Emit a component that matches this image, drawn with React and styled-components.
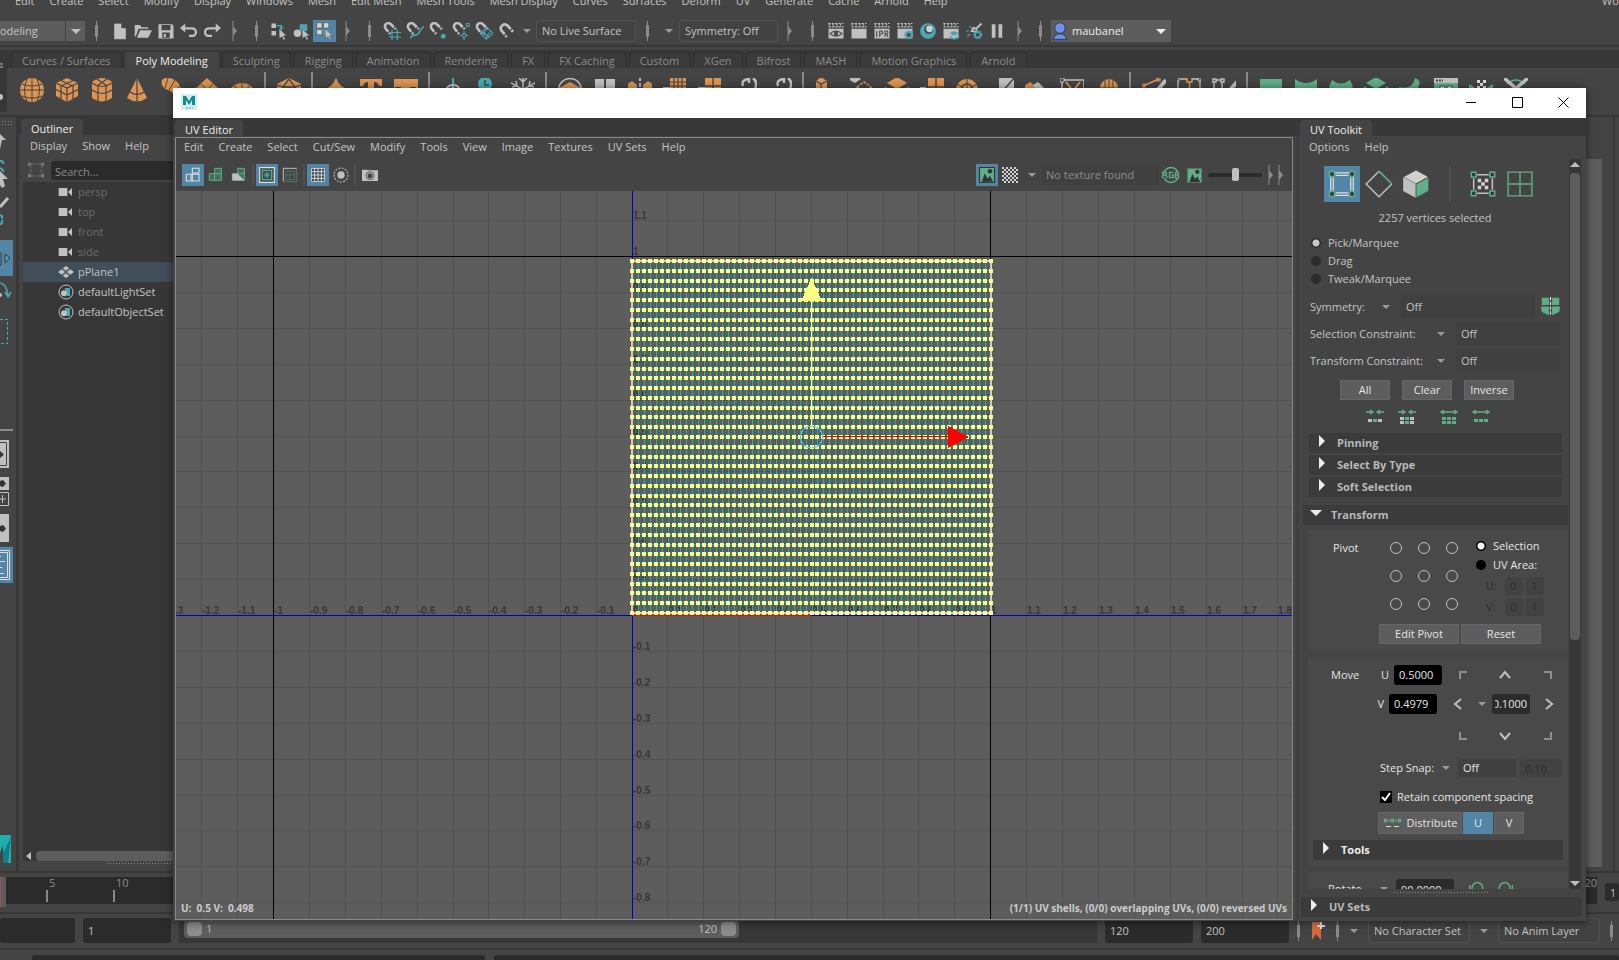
import React from "react";
import styled, { createGlobalStyle, css } from "styled-components";

const c = {
  bg: "#444444",
  dark: "#373737",
  field: "#2b2b2b",
  raised: "#5d5d5d",
  text: "#c4c4c4",
  dim: "#8c8c8c",
  blue: "#5285a6",
  green: "#5fae88",
  teal: "#49a8b4",
  orange: "#dd9351",
  icon: "#c0c0c0",
};

const Global = createGlobalStyle`
  * { box-sizing: border-box; }
  html, body, #root { height: 100%; }
  body { margin: 0; background: ${c.bg}; overflow: hidden; }
  body, button, input, select {
    font-family: "Open Sans", "Noto Sans", sans-serif;
    font-size: 11px;
    line-height: 16px;
    color: ${c.text};
  }
  button, input, select { margin: 0; padding: 0; border: 0; border-radius: 0; background: none; outline: none; }
  select, input { appearance: none; }
  a { color: inherit; text-decoration: none; }
  svg { display: block; flex: none; }
`;

/* ---------- shared parts ---------- */

const Screen = styled.div`
  position: relative;
  display: flex;
  flex-direction: column;
  height: 100vh;
  overflow: hidden;
`;

const MenuRow = styled.nav`
  display: flex;
  flex: none;
  align-items: ${(p) => (p.$clipped ? "flex-end" : "center")};
  gap: 15px;
  height: ${(p) => (p.$clipped ? 9 : p.$h || 22)}px;
  padding-left: ${(p) => p.$left}px;
  white-space: nowrap;
`;
const MenuEnd = styled.a`
  margin-left: auto;
  width: 17px;
  overflow: visible;
`;

const Slot = styled.button`
  display: flex;
  flex: none;
  align-items: center;
  justify-content: center;
  width: ${(p) => p.$w || 23}px;
  height: ${(p) => p.$h || 22}px;
  background: ${(p) => (p.$on ? c.blue : "none")};
`;

const Separator = styled.span`
  display: flex;
  flex: none;
  align-items: center;
  justify-content: center;
  width: ${(p) => p.$w || 23}px;
  height: 20px;
  &::before {
    content: "";
    width: 1px;
    height: 20px;
    background: #8a8a8a;
  }
  &::after {
    content: "";
    width: 3px;
    height: 12px;
    margin-left: -2px;
    background: #8a8a8a;
  }
`;

const Divider = styled.span`
  flex: none;
  width: 2px;
  height: ${(p) => p.$h}px;
  margin: 0 ${(p) => p.$m}px;
  background: ${(p) => p.$color || "#505050"};
`;

const Caret = styled.span`
  flex: none;
  width: 0;
  height: 0;
  border-left: 4px solid transparent;
  border-right: 4px solid transparent;
  border-top: 4px solid #9a9a9a;
`;

const FlatSelect = styled.select`
  flex: ${(p) => (p.$w ? "none" : 1)};
  width: ${(p) => (p.$w ? p.$w + "px" : "auto")};
  min-width: 0;
  height: ${(p) => p.$h || 22}px;
  padding-left: 5px;
  background: #404040;
  border-radius: 3px;
  color: ${(p) => p.$color || c.text};
  opacity: 1;
`;

function Svg({ w = 22, h, box = 24, children }) {
  return (
    <svg width={w} height={h || w} viewBox={`0 0 ${box} ${box}`} fill="none" aria-hidden="true">
      {children}
    </svg>
  );
}

function Collapser({ w = 23 }) {
  return (
    <Slot $w={w} aria-label="Collapse section">
      <svg width="6" height="20" viewBox="0 0 6 20" aria-hidden="true">
        <path d="M1 0V20" stroke="#8a8a8a" />
        <path d="M1 5L5 10L1 15Z" fill="#8a8a8a" />
      </svg>
    </Slot>
  );
}

/* ---------- status line ---------- */

const StatusLine = styled.div`
  display: flex;
  flex: none;
  align-items: center;
  height: 36px;
  padding-top: 8px;
`;
const ModeCombo = styled.label`
  position: relative;
  display: flex;
  flex: none;
  width: ${(p) => p.$w}px;
  height: ${(p) => p.$h}px;
  background: ${c.raised};
  overflow: hidden;
  select {
    flex: none;
    width: calc(100% + ${(p) => p.$cut || 0}px);
    margin-left: -${(p) => p.$cut || 0}px;
    padding-left: ${(p) => p.$pad}px;
    color: ${(p) => p.$color || c.text};
  }
`;
const ComboArrow = styled.span`
  position: absolute;
  top: 0;
  right: 0;
  display: flex;
  align-items: center;
  justify-content: center;
  width: 20px;
  height: 100%;
  border-left: ${(p) => (p.$line ? "1px solid #444" : "0")};
  pointer-events: none;
  &::after {
    content: "";
    border-left: 5px solid transparent;
    border-right: 5px solid transparent;
    border-top: 5px solid ${(p) => p.$color};
  }
`;
const AccountBox = styled.span`
  position: absolute;
  top: 2px;
  left: 0;
`;

const pointer = <path d="M12 9L22 18L18 18.500L20.500 23L18 24L16 19.500L12.500 22Z" fill={c.icon} stroke="#444" strokeWidth=".6" />;
const magnet = (
  <>
    <path d="M7 13L4 9.500C0 4 6 -1 10.500 3L14.500 7" stroke={c.icon} strokeWidth="3.400" />
    <path d="M8 14.200L9.500 16M15.500 8L17 9.700" stroke={c.icon} strokeWidth="3.400" />
  </>
);
const clap = (
  <>
    <path d="M2 9H22V22H2Z" fill={c.icon} />
    <path d="M2 2L5 6M7 2L10 6M12 2L15 6M17 2L20 6M2 2H22M2 6.500H22" stroke={c.icon} strokeWidth="1.500" strokeDasharray="3 1.500" />
  </>
);
const gear = (x, y) => (
  <>
    <circle cx={x} cy={y} r="4.500" stroke={c.teal} strokeWidth="3" strokeDasharray="2 1.200" fill="#444" />
    <circle cx={x} cy={y} r="3.400" stroke={c.teal} strokeWidth="1.800" />
  </>
);

const fileIcons = [
  ["New scene", <path d="M4 2H14L20 8V23H4ZM14 2V8H20" fill={c.icon} stroke="#555" strokeWidth=".6" />],
  ["Open scene", <path d="M1 20V4H8L10 7H19V9H6L3 18ZM4 21L8 11H24L19 21Z" fill={c.icon} />],
  ["Save scene", <path fillRule="evenodd" d="M2 3H20L22 5V22H2ZM6 4V11H18V4ZM7 14V21H17V14ZM9 16H12V20H9Z" fill={c.icon} />],
  ["Undo", <path d="M7 2L0 8L7 14V10H16C21 10 21 17 16 17H12V20H16C25 20 25 7 16 7H7Z" fill={c.icon} />],
  ["Redo", <path d="M17 2L24 8L17 14V10H8C3 10 3 17 8 17H12V20H8C-1 20 -1 7 8 7H17Z" fill={c.icon} />],
];
const maskIcons = [
  ["Select by hierarchy", <><path d="M2 2H8V8H2ZM2 12H8V18H2Z" fill={c.icon} /><path d="M9 5H15V16M13 8H18" stroke={c.teal} strokeWidth="2" />{pointer}</>],
  ["Select by object", <><circle cx="6" cy="15" r="5" fill={c.icon} /><path d="M9 3H19V12H9Z" fill={c.teal} />{pointer}</>],
  ["Select by component", <><path d="M1 1H8V8H1ZM10 1H17V8H10ZM1 10H8V17H1Z" fill="#d4d4d4" stroke="#333" strokeWidth=".6" /><path d="M10 10H17V17H10Z" fill={c.teal} />{pointer}</>],
];
const snapIcons = [
  ["Snap to grids", <>{magnet}<path d="M8 14H24M8 20H24M12 10V24M19 10V24" stroke={c.teal} strokeWidth="1.600" /></>],
  ["Snap to curves", <>{magnet}<path d="M6 22Q7 18 11 17.500Q16 18 18 13Q20 9 24 6" stroke={c.teal} strokeWidth="2.200" /></>],
  ["Snap to points", <>{magnet}<circle cx="19" cy="19" r="3.200" fill={c.teal} /></>],
  ["Snap to projected centre", <>{magnet}<circle cx="21" cy="4" r="2.200" stroke={c.teal} strokeWidth="1.500" /><circle cx="16" cy="18" r="2.500" stroke={c.teal} strokeWidth="1.500" /><path d="M16 12V15M16 21V24M10 18H13M19 18H22" stroke={c.teal} strokeWidth="1.500" /></>],
  ["Snap to view planes", <>{magnet}<path d="M7 15L16 7L24 15L15 23ZM10 13L19 20M14 11L11 19M21 12L14 22" stroke={c.teal} strokeWidth="1.400" /></>],
  ["Make live", <><path d="M9 16.500L5 12C1 6 8 0.500 13 5L17 9.500" stroke={c.icon} strokeWidth="3.600" /><path d="M10 18L11.500 20M18 10.700L20 13" stroke={c.icon} strokeWidth="3.600" /></>],
];
const renderIcons = [
  ["Open render view", <>{clap}<path d="M4 15.500Q12 9 20 15.500Q12 22 4 15.500Z" stroke="#444" strokeWidth="1.600" /><circle cx="12" cy="15.500" r="2.800" fill="#444" /></>],
  ["Render frame", clap],
  ["IPR render", <>{clap}<path d="M5 12V20M9 20V12H12Q14 14 12 16H9M16 20V12H19Q21 14 19 16H16M18 16L20 20" stroke="#444" strokeWidth="1.400" /></>],
  ["Render settings", <>{clap}{gear(17, 17)}</>],
  ["Hypershade", <><circle cx="12" cy="12" r="10.500" fill={c.teal} /><circle cx="13" cy="10" r="6" fill="#3a4a4d" /><circle cx="14" cy="9" r="4.500" fill="#d0d0d0" /></>],
  ["Render setup", <>{clap}<path d="M10 15L16 12L23 15L16 18.500ZM10 18L16 21.500L23 18V20L16 24L10 20Z" fill={c.teal} /></>],
  ["Light editor", <><path d="M22 2L15 9L11 8L9 12L14 13L17 11" stroke={c.icon} strokeWidth="2.600" /><path d="M1 12H5M3 19L7 16M6 5L8 8" stroke={c.teal} strokeWidth="1.600" />{gear(17, 17)}</>],
  ["Pause viewport", <path d="M5 3H10V21H5ZM14 3H19V21H14Z" fill={c.icon} />],
];

function IconSet({ items, on }) {
  return items.map(([label, art], i) => (
    <Slot key={label} aria-label={label} $on={on === i}>
      <Svg w={18}>{art}</Svg>
    </Slot>
  ));
}

/* ---------- shelf ---------- */

const ShelfBox = styled.div`
  display: flex;
  flex: none;
  height: 72px;
  padding-top: 3px;
  border-top: 2px solid ${c.dark};
  border-bottom: 2px solid ${c.dark};
`;
const ShelfHandle = styled.div`
  display: flex;
  flex-direction: column;
  justify-content: space-around;
  flex: none;
  width: 7px;
  height: 62px;
  background: ${c.dark};
`;
const ShelfMain = styled.div`
  flex: 1;
  min-width: 0;
`;
const ShelfTabs = styled.div`
  display: flex;
  align-items: flex-end;
  gap: 3px;
  height: 18px;
  padding-left: 4px;
  background: ${c.dark};
`;
const ShelfTab = styled.button`
  height: 16px;
  padding: 0 10px;
  border: 1px solid ${(p) => (p.$on ? c.bg : "#2f2f2f")};
  border-bottom: 0;
  border-radius: 3px 3px 0 0;
  background: ${(p) => (p.$on ? c.bg : "#3a3a3a")};
  color: ${(p) => (p.$on ? "#eeeeee" : c.dim)};
  white-space: nowrap;
`;
const ShelfIcons = styled.div`
  display: flex;
  align-items: center;
  height: 44px;
  padding-left: 7px;
`;

const O = c.orange;
const G = c.green;
const I = c.icon;
const K = "#444";
const shelf = [
  ["Sphere", <><circle cx="12" cy="12" r="12" fill={O} /><path d="M0 12H24M2 6Q12 10 22 6M2 18Q12 22 22 18M12 0V24M7 1Q2 12 7 23M17 1Q22 12 17 23" stroke={K} /></>],
  ["Cube", <><path d="M12 0L23 5V18L12 24L1 18V5Z" fill={O} /><path d="M1 5L12 10L23 5M12 10V24M1 11.500L12 17L23 11.500M6 7.500V21M18 7.500V21M6 2.500L18 8M18 2.500L6 8" stroke={K} strokeWidth="1.200" /></>],
  ["Cylinder", <><path d="M2 4Q12 -4 22 4V20Q12 27 2 20Z" fill={O} /><path d="M2 5Q12 12 22 5M2 12Q12 19 22 12M8 8V24M16 8V24M7 1L17 8M17 1L7 8" stroke={K} strokeWidth="1.200" /></>],
  ["Cone", <><path d="M12 0L22 20Q12 27 2 20Z" fill={O} /><path d="M12 0V24M5 14Q12 19 19 14" stroke={K} strokeWidth="1.200" /></>],
  ["Torus", <><path d="M2 2Q6 -2 13 1Q22 5 24 22H17Q14 14 8 12Q0 9 2 2Z" fill={O} /><path d="M8 0L5 10M15 2L9 12M20 8L13 15" stroke={K} /></>],
  ["Plane", <><path d="M12 0L25 12L12 24L-1 12Z" fill={O} /><path d="M6 6L18 18M18 6L6 18" stroke={K} /></>],
  ["Disc", <><ellipse cx="12" cy="14" rx="12" ry="9" fill={O} /><path d="M12 5V14M4 8L12 14L20 8" stroke={K} /></>],
  null,
  ["Platonic solid", <><path d="M12 0L24 6V18L12 24L0 18V6Z" fill={O} /><path d="M12 1L6 9H18ZM0 7L6 9L2 18M24 7L18 9L22 18M6 9L12 20L18 9" stroke={K} strokeWidth="1.300" /></>],
  null,
  ["Super shape", <path d="M12 -1Q14 9 26 12Q14 15 12 25Q10 15 -2 12Q10 9 12 -1Z" fill={O} />],
  ["Type", <path d="M1 1H23V8H20Q19 4 15 4V22H9V4Q5 4 4 8H1Z" fill={O} />],
  ["SVG", <><path d="M0 1H24V23H0Z" fill={O} /><path d="M7 10H2V13H6V18M9 10L12 18L15 10M22 10H17V17H22" stroke={K} strokeWidth="2" /></>],
  null,
  ["Frame zero", <><path d="M12 -2V10" stroke={c.teal} strokeWidth="2" /><path d="M5 13Q6 7 12 7T19 13L12 10Z" stroke={I} strokeWidth="2" /></>],
  ["Delete history", <><circle cx="9" cy="6" r="7" fill={c.teal} /><path d="M9 2V7H13" stroke={K} strokeWidth="1.500" /><path d="M14 11H25" stroke={c.teal} strokeWidth="2" /></>],
  ["Freeze", <path d="M12 -2V24M0 5L24 18M24 5L0 18M8 0L12 4L16 0M1 9L6 8L5 3M23 9L18 8L19 3" stroke={I} strokeWidth="1.500" />],
  null,
  ["Smooth", <><circle cx="12" cy="12" r="11.500" stroke={I} strokeWidth="1.500" /><path d="M1 10L12 4L23 10L12 17Z" fill={O} /></>],
  ["Combine", <path d="M2 1H11V24H2ZM13 1H22V24H13Z" fill={I} />],
  ["Mirror", <><path d="M-2 7L4 3L9 7V14H-2ZM15 7L20 3L26 7V14H15Z" fill={O} /><path d="M12 -1V24" stroke="#ddd" strokeDasharray="4 2" strokeWidth="1.500" /></>],
  ["Remesh", <><path d="M7 0H23V18H7Z" fill={O} /><path d="M7 4H23M7 8H23M11 0V18M15 0V18M19 0V18" stroke={K} strokeWidth="1.200" /><path d="M-1 10H7" stroke={I} strokeWidth="2" /></>],
  ["Retopologize", <><path d="M7 0H23V18H7Z" fill={O} /><path d="M7 8H23M15 0V18" stroke={K} strokeWidth="1.400" /><path d="M-1 10H7" stroke={I} strokeWidth="2" /></>],
  ["Reduce", <><path d="M-2 10H8V14H-2Z" fill={O} /><path d="M10 8Q8 2 15 1M13 -1H16V5M20 0Q26 5 21 12" stroke={I} strokeWidth="2.400" /></>],
  ["Spin edge", <><path d="M-2 10H8V14H-2Z" fill={O} /><path d="M10 8Q8 2 15 1M13 -1H16V5M20 0Q26 5 21 12" stroke={I} strokeWidth="2.400" /></>],
  null,
  ["Extrude", <><path d="M1 3L6 -1L12 3V20H1Z" fill={O} /><path d="M1 3L6 6L12 3M6 6V20" stroke={K} strokeWidth="1.200" /></>],
  ["Bevel", <><path d="M-2 1L4 -3L11 1L5 5Z" fill={I} /><path d="M7 9L14 4L21 9L14 14Z" stroke={O} strokeWidth="1.500" strokeDasharray="3 1" /></>],
  ["Bridge", <><path d="M2 5L12 -1L22 5L12 11Z" fill={O} /><path d="M0 9L12 15L24 9V13L12 20L0 13Z" fill={I} /></>],
  ["Fill", <><path d="M8 0H24V18H8Z" fill={O} /><path d="M16 0V14M8 9L24 9" stroke={K} strokeWidth="1.500" /><path d="M-2 10H6" stroke={I} strokeWidth="2" /></>],
  ["Circularize", <><circle cx="12" cy="12" r="11" fill={O} /><circle cx="12" cy="12" r="6" stroke={K} strokeWidth="1.500" /><path d="M12 0V24M2 6L22 18M22 6L2 18" stroke={K} /></>],
  ["Connect", <><path d="M9 0H24V14H9Z" fill={I} /><path d="M0 10H12V14H0Z" fill={O} /><path d="M24 0L12 14" stroke={K} strokeWidth="1.500" /></>],
  ["Detach", <><path d="M-2 9L5 4L11 9L5 14Z" fill={O} /><path d="M8 7L13 4L21 12L13 14Z" fill={I} /></>],
  ["Target weld", <><path d="M2 2V24M2 2H24M24 2V24" stroke={I} strokeWidth="1.500" /><path d="M0 0H4V4H0Z" stroke={I} fill={K} /><path d="M6 4L13 13L20 4" stroke={O} strokeWidth="2" /></>],
  ["Quad draw", <><circle cx="14" cy="10" r="9" fill={O} /><path d="M5 10H23M14 0V20M10 2V18M18 2V18" stroke={K} /></>],
  null,
  ["Multi-cut", <><path d="M1 8L17 1" stroke={O} strokeWidth="1.500" /><path d="M0 6H3V9H0ZM15 0H18V3H15Z" stroke={O} strokeWidth="1.200" /><path d="M24 2L14 14" stroke={I} strokeWidth="4" /></>],
  ["Connect tool", <><path d="M3 1H10M15 1H22M1 3V20M23 3V20" stroke={I} strokeWidth="1.300" /><path d="M-1 0H2V3H-1ZM21 0H24V3H21Z" stroke={I} /><path d="M10 -1H15V4H10ZM12.500 4V20" stroke={O} strokeWidth="1.500" /></>],
  ["Edge flow", <><path d="M1 1H4V4H1ZM9 1H12V4H9ZM2 4V20M10 4V20M4 2H9" stroke={I} strokeWidth="1.500" /><path d="M25 4L18 12" stroke={I} strokeWidth="4" /></>],
  null,
  ["UV planar", <path d="M1 1H23V23H1Z" fill={G} />],
  ["UV cylindrical", <path d="M1 1Q12 9 23 1V23H1Z" fill={G} />],
  ["UV spherical", <path d="M3 2Q12 9 21 2Q24 7 24 12H0Q0 7 3 2Z" fill={G} />],
  ["UV automatic", <><path d="M2 5L12 -1L22 5L12 11Z" fill={G} /><path d="M0 8L12 15L24 8V13L12 20L0 13Z" fill={G} /></>],
  ["UV contour", <path d="M0 9Q14 12 16 0Q23 2 19 10L12 14H0Z" fill={G} />],
  ["UV editor", <><path d="M0 0H24V5H0Z" fill={I} /><path d="M0 5H24V20H0Z" fill={G} /><path d="M2 2.500H9" stroke={K} strokeWidth="2" strokeDasharray="2 1" /><path d="M6 8H11V14H6ZM13 8H18V14H13Z" fill="#ddd" stroke={K} /></>],
  ["UV 3D cut", <><path d="M-1 6Q6 8 8 14H-1ZM25 6Q18 8 16 14H25Z" fill={G} /><path d="M8 2H11V5H8ZM14 2H17V5H14ZM11 5H14V8H11ZM8 8H11V11H8ZM14 8H17V11H14Z" fill="#ddd" /></>],
  ["UV cut and sew", <><path d="M3 6Q12 -2 21 6" stroke={G} strokeWidth="1.500" /><path d="M0 0L16 14M24 0L8 14" stroke={I} strokeWidth="3.500" /></>],
];

/* ---------- workspace behind the floating window ---------- */

const Workspace = styled.div`
  display: flex;
  flex: 1;
  min-height: 0;
`;
const Toolbox = styled.div`
  display: flex;
  flex: none;
  flex-direction: column;
  width: 18px;
  border-right: 2px solid ${c.dark};
  overflow: hidden;
`;
const OutlinerPanel = styled.section`
  display: flex;
  flex: none;
  flex-direction: column;
  width: 250px;
  border-left: 1px solid ${c.dark};
`;
const TabStrip = styled.div`
  display: flex;
  flex: none;
  align-items: flex-end;
  height: 18px;
  padding-left: ${(p) => p.$left}px;
  background: ${c.dark};
`;
const Tab = styled.button`
  height: 16px;
  padding: 2px 10px 0;
  border-radius: 3px 3px 0 0;
  background: ${c.bg};
  color: #eeeeee;
  white-space: nowrap;
`;
const SearchRow = styled.label`
  display: flex;
  align-items: center;
  gap: 7px;
  height: 25px;
  padding: 1px 0 0 9px;
`;
const SearchInput = styled.input`
  flex: 1;
  height: 19px;
  padding: 2px 0 0 4px;
  border-radius: 3px;
  background: ${c.field};
  &::placeholder { color: #8a8a8a; opacity: 1; }
`;
const NodeList = styled.ul`
  flex: 1;
  margin: 0 0 0 4px;
  padding: 0;
  background: ${c.dark};
  list-style: none;
`;
const NodeRow = styled.li`
  display: flex;
  align-items: center;
  gap: 4px;
  height: 20px;
  padding-left: 35px;
  background: ${(p) => (p.$on ? "#424d5a" : "none")};
  color: ${(p) => (p.$muted ? "#6d6d6d" : c.text)};
`;
const HScroll = styled.div`
  display: flex;
  align-items: center;
  gap: 5px;
  height: 10px;
  margin-left: 4px;
  padding-left: 3px;
  background: ${c.dark};
  &::before {
    content: "";
    border-top: 4px solid transparent;
    border-bottom: 4px solid transparent;
    border-right: 5px solid ${c.icon};
  }
  &::after {
    content: "";
    flex: 1;
    height: 10px;
    border-radius: 4px;
    background: ${c.raised};
  }
`;
const Grip = styled.div`
  flex: none;
  width: ${(p) => p.$w}px;
  height: 1px;
  margin: ${(p) => p.$m};
  background: repeating-linear-gradient(90deg, #8a8a8a 0 1px, transparent 1px 3px);
`;
const Viewport = styled.div`
  flex: 1;
  margin: 42px 11px 4px 0;
  background: ${c.raised};
`;
const EdgeRule = styled.div`
  flex: none;
  width: 6px;
  border-left: 2px solid ${c.dark};
`;

const camera = <path d="M1 6H14V18H1ZM15 12L21 6V18L15 12Z" fill={I} />;
const setArt = <><circle cx="12" cy="12" r="10.500" stroke={I} strokeWidth="1.500" /><path d="M10 6H18V18H13Z" fill={c.teal} /><circle cx="9" cy="14" r="4.500" fill={I} /></>;
const planeArt = <path d="M12 3L17 6.500L12 10L7 6.500ZM5.500 8L11 12L5.500 16L0 12ZM18.500 8L24 12L18.500 16L13 12ZM12 14L17 17.500L12 21L7 17.500Z" fill={I} />;
const nodes = [
  ["persp", camera, true],
  ["top", camera, true],
  ["front", camera, true],
  ["side", camera, true],
  ["pPlane1", planeArt, false],
  ["defaultLightSet", setArt, false],
  ["defaultObjectSet", setArt, false],
];

/* ---------- time and range sliders ---------- */

const TimeRow = styled.div`
  display: flex;
  flex: none;
  height: 41px;
  padding-top: 4px;
  border-top: 2px solid ${c.dark};
`;
const CurrentFrame = styled.div`
  width: 6px;
  height: 30px;
  background: ${c.raised};
  border-left: 1px solid #a05050;
`;
const TimeTrack = styled.div`
  display: flex;
  flex: 1;
  height: 27px;
  padding-left: 40px;
  background: ${c.field};
  overflow: hidden;
`;
const TimeMark = styled.span`
  display: flex;
  flex: none;
  flex-direction: column;
  gap: 2px;
  width: 67px;
  line-height: 11px;
  color: ${c.dim};
  text-indent: 3px;
  &::after {
    content: "";
    width: 2px;
    height: 12px;
    background: #8a8a8a;
  }
`;
const LastMark = styled.span`
  margin-left: auto;
  line-height: 11px;
  color: ${c.dim};
`;
const RangeRow = styled.div`
  display: flex;
  flex: none;
  align-items: center;
  gap: 8px;
  height: 36px;
  padding-bottom: 1px;
  border-top: 2px solid ${c.dark};
`;
const NumField = styled.input`
  flex: none;
  width: ${(p) => p.$w}px;
  height: ${(p) => p.$h}px;
  padding: 0 ${(p) => p.$pad || 5}px;
  border-radius: 3px;
  background: ${(p) => p.$bg || c.field};
  color: ${(p) => p.$color || c.text};
  direction: ${(p) => (p.$tail ? "rtl" : "ltr")};
`;
const RangeTrack = styled.div`
  flex: 1;
  height: 25px;
  padding: 2px 0 5px 5px;
  background: ${c.dark};
`;
const RangeThumb = styled.div`
  display: flex;
  align-items: center;
  width: 555px;
  height: 18px;
  padding: 0 3px;
  gap: 4px;
  border-radius: 4px;
  background: ${c.raised};
`;
const Knob = styled.span`
  width: 15px;
  height: 14px;
  border-radius: 4px;
  background: #8c8c8c;
`;
const Grow = styled.span`
  flex: 1;
`;
const Tail = styled.div`
  display: flex;
  align-items: center;
  gap: 10px;
  width: 322px;
`;
const CommandRow = styled.div`
  display: flex;
  flex: none;
  gap: 9px;
  height: 12px;
  padding: 5px 0 0 32px;
  border-top: 2px solid ${c.dark};
`;
const CommandField = styled.input`
  flex: ${(p) => (p.$w ? "none" : 1)};
  width: ${(p) => p.$w || 100}px;
  height: 5px;
  border-radius: 3px 3px 0 0;
  background: ${c.field};
`;

/* ---------- floating UV window ---------- */

const UvWindow = styled.section`
  position: absolute;
  top: 88px;
  right: 33px;
  bottom: 39px;
  left: 173px;
  display: flex;
  flex-direction: column;
  background: ${c.bg};
  box-shadow: 0 1px 8px rgba(0, 0, 0, 0.55);
`;
const TitleBar = styled.header`
  display: flex;
  flex: none;
  align-items: center;
  height: 30px;
  padding: 0 0 2px 8px;
  background: #ffffff;
`;
const WinButton = styled.button`
  display: flex;
  align-items: center;
  justify-content: center;
  width: 46px;
  height: 28px;
`;
const WinBody = styled.div`
  display: flex;
  flex: 1;
  min-height: 0;
`;
const EditorColumn = styled.div`
  display: flex;
  flex: 1;
  flex-direction: column;
  min-width: 0;
`;
const EditorFrame = styled.div`
  display: flex;
  flex: 1;
  flex-direction: column;
  min-height: 0;
  margin: 1px 4px 1px 2px;
  border: 1px solid #8a8a8a;
`;
const EditorTools = styled.div`
  display: flex;
  flex: none;
  align-items: center;
  height: 35px;
  padding: 3px 6px 0;
`;
const Exposure = styled.input`
  width: 54px;
  height: 14px;
  margin: 0 4px 0 2px;
  &::-webkit-slider-runnable-track {
    height: 4px;
    border-radius: 2px;
    background: ${c.field};
  }
  &::-webkit-slider-thumb {
    appearance: none;
    width: 7px;
    height: 13px;
    margin-top: -5px;
    border-radius: 2px;
    background: ${c.icon};
  }
`;
const CanvasWrap = styled.div`
  display: flex;
  flex: 1;
  flex-direction: column;
  justify-content: flex-end;
  position: relative;
  min-height: 0;
  background: #5d5d5d;
  overflow: hidden;
`;
const CanvasSvg = styled.svg`
  position: absolute;
  inset: 0;
  width: 100%;
  height: 100%;
  text { font: bold 10px "Liberation Sans", Arial, sans-serif; fill: #383838; }
`;
const HudRow = styled.div`
  position: relative;
  display: flex;
  justify-content: space-between;
  padding: 0 5px 3px;
  font-size: 10px;
  font-weight: 700;
  color: #cccccc;
  white-space: pre;
`;

const OX = 456.5;
const OY = 424.5;
const UNIT = 359;
const px = (n) => Math.round(n - 0.5) + 0.5;

function UvCanvas() {
  const minor = [];
  const major = [];
  const labels = [];
  for (let i = -20; i <= 30; i++) {
    const x = px(OX + (i * UNIT) / 10 - (i > 0 ? 0.8 : 0));
    const y = px(OY - (i * UNIT) / 10);
    if (i !== 0) {
      (Math.abs(i) === 10 ? major : minor).push(`M${x} 0V2000`);
      (i === 10 ? major : minor).push(`M0 ${y}H3000`);
    }
    const t = String(i / 10);
    labels.push(<text key={"lx" + i} x={x + 0.5} y={OY - 1.5}>{t}</text>);
    if (i !== 0) labels.push(<text key={"ly" + i} x={OX + 0.5} y={y - 1.5}>{t}</text>);
  }
  const cols = Array.from({ length: 61 }, (_, i) => Math.round(456 + (i * 359) / 60));
  const rows = Array.from({ length: 37 }, (_, i) => Math.round(70 + (i * 352) / 36));
  const left = cols[0];
  const right = cols[60];
  const top = rows[0];
  const bottom = rows[36];
  return (
    <CanvasSvg shapeRendering="crispEdges" fill="none" role="img" aria-label="UV layout">
      <path d={minor.join("")} stroke="#525252" />
      <path d={major.join("")} stroke="#000" />
      {labels}
      <path d={`M0 ${OY}H3000M${OX} 0V2000`} stroke="#0000c8" />
      <path d={cols.map((x) => `M${x + 0.5} ${top}V${bottom}`).join("")} stroke="#0cb4c2" />
      <path d={rows.map((y) => `M${left} ${y - 0.5}H${right}`).join("")} stroke="#0cb4c2" />
      <path d={`M${left} ${top}H${right}V${bottom}H${left}Z`} stroke="#cccccc" strokeWidth="2" />
      <path d={rows.map((y) => cols.map((x) => `M${x - 2} ${y}h4`).join("")).join("")} stroke="#ffff84" strokeWidth="4" />
      <path d={`M456 ${OY}H635`} stroke="#ff0000" />
      <path d="M635.500 110V235" stroke="#ffff84" />
      <path d="M635.500 87L646 110H625Z" fill="#ffff84" />
      <path d="M647 245.500H772" stroke="#ff0000" />
      <path d="M772 235V257L793 246Z" fill="#ff0000" />
      <circle cx="635.500" cy="246" r="11" stroke="#5ac4ee" />
    </CanvasSvg>
  );
}

const shells = "M2 10H10V2H20V20H2ZM10 10H20M10 10V20";
const uvLeft = [
  ["Wireframe", true, <path d="M2 11H9V21H2ZM11 11H21V21H11ZM11 2H21V9H11Z" stroke="#e0e0e0" strokeWidth="1.600" />],
  ["Shaded", false, <path d={shells} stroke={G} fill="#3f705a" strokeWidth="1.500" />],
  ["Distortion", false, <><path d={shells} stroke={G} fill="#3f705a" strokeWidth="1.500" /><path d="M2 10H10L20 20H2Z" fill={I} /></>],
  null,
  ["Texture borders", true, <><path d="M1 1H23V23H1Z" stroke="#ddd" strokeWidth="1.800" fill="#3f4448" /><path d="M5 5H19V19H5Z" stroke={G} strokeWidth="1.800" /><path d="M8 8H16V16H8Z" fill="#3f6a86" /><path d="M8 12H16M12 8V16" stroke={G} strokeWidth="1.500" /></>],
  ["Shell borders", false, <><path d="M2 22V2H22" stroke={I} strokeWidth="1.500" /><path d="M6 6H19V19H6ZM6 12H19M12 6V19M22 3V22H3" stroke="#4a7a63" strokeWidth="1.400" /></>],
  null,
  ["Grid", true, <><path d="M1 1H23V23H1Z" fill="#3b4a55" /><path d="M2 2H22V22H2ZM2 7H22M2 12H22M2 17H22M7 2V22M12 2V22M17 2V22" stroke="#ddd" strokeWidth="1.400" /></>],
  ["Isolate", false, <><circle cx="12" cy="12" r="5.500" fill={I} /><circle cx="12" cy="12" r="10.500" stroke={I} strokeWidth="1.600" strokeDasharray="3 2" /></>],
  null,
  ["Snapshot", false, <><path d="M0 4H8L9 5H24V21H0Z" fill={I} /><circle cx="12" cy="13" r="6" stroke={K} strokeWidth="1.200" /><circle cx="12" cy="13" r="3.800" fill={K} /></>],
];
const picArt = (bgc) => <><path d="M2 2H22V22H2Z" fill={G} stroke={bgc} strokeWidth="1.500" /><path d="M5 21L9 10L13 17L16 13L20 21Z" fill="#333" /><circle cx="16" cy="7" r="3" fill="#333" /></>;
const checkArt = (n, s, o, fill) => {
  const d = [];
  for (let y = 0; y < n; y++) for (let x = 0; x < n; x++) if ((x + y) % 2 === 0) d.push(`M${o + x * s} ${o + y * s}h${s}v${s}h-${s}Z`);
  return <path d={d.join("")} fill={fill} />;
};

/* ---------- UV toolkit ---------- */

const Toolkit = styled.aside`
  display: flex;
  flex: none;
  flex-direction: column;
  width: 289px;
  border-left: 1px solid ${c.dark};
`;
const ToolkitScroll = styled.div`
  display: flex;
  flex: 1;
  min-height: 0;
`;
const ToolkitContent = styled.div`
  flex: 1;
  min-width: 0;
  overflow: hidden;
  padding-right: 1px;
`;
const VScroll = styled.div`
  display: flex;
  flex: none;
  flex-direction: column;
  align-items: center;
  width: 12px;
  margin: 1px 5px 0 0;
  padding: 3px 0;
  background: ${c.dark};
`;
const VThumb = styled.div`
  width: 10px;
  height: 467px;
  margin: 6px 0 auto;
  border-radius: 4px;
  background: ${c.raised};
`;
const VArrow = styled.span`
  border-left: 5px solid transparent;
  border-right: 5px solid transparent;
  ${(p) => (p.$up ? css`border-bottom: 5px solid ${c.icon};` : css`border-top: 5px solid ${c.icon};`)}
`;
const ModeRow = styled.div`
  display: flex;
  align-items: center;
  height: 44px;
  padding: 8px 0 0 26px;
`;
const CountLine = styled.div`
  padding-left: 4px;
  line-height: 32px;
  text-align: center;
`;
const RadioSet = styled.div`
  padding-bottom: 3px;
`;
const RadioLabel = styled.label`
  display: flex;
  align-items: center;
  gap: 7px;
  height: ${(p) => p.$h}px;
  padding-left: ${(p) => p.$left}px;
`;
const Radio = styled.input`
  width: 10px;
  height: 10px;
  border-radius: 50%;
  background: ${(p) => p.$bg || c.field};
  &:checked { background: radial-gradient(${(p) => (p.$bg ? "#fff" : "#c8c8c8")} 3px, ${(p) => p.$bg || c.field} 4px); }
`;
const OptionRow = styled.label`
  display: flex;
  align-items: center;
  height: 23px;
  margin: 4px 8px 4px 12px;
`;
const OptionName = styled.span`
  flex: none;
  width: ${(p) => p.$w}px;
`;
const ButtonRow = styled.div`
  display: flex;
  gap: ${(p) => p.$gap}px;
  padding: ${(p) => p.$pad};
`;
const PushButton = styled.button`
  display: flex;
  align-items: center;
  justify-content: center;
  gap: 5px;
  width: ${(p) => p.$w}px;
  height: ${(p) => p.$h || 20}px;
  border: 1px solid ${(p) => (p.$on ? c.blue : "#666666")};
  background: ${(p) => (p.$on ? c.blue : c.raised)};
  color: #e6e6e6;
`;
const GrowRow = styled.div`
  display: flex;
  gap: 24px;
  height: 33px;
  padding: 9px 0 0 68px;
`;
const GrowPair = styled.div`
  display: flex;
  gap: 14px;
`;
const Fold = styled.button`
  display: flex;
  flex: none;
  align-items: center;
  gap: ${(p) => (p.$open ? 9 : 12)}px;
  width: ${(p) => p.$w};
  height: 20px;
  margin: ${(p) => p.$m};
  padding-left: ${(p) => (p.$open ? 7 : 10)}px;
  border-radius: 2px;
  background: #3b3b3b;
  color: ${(p) => (p.$bright ? "#eeeeee" : "#b8b8b8")};
  font-weight: 700;
  &::before {
    content: "";
    ${(p) =>
      p.$open
        ? css`border-left: 6px solid transparent; border-right: 6px solid transparent; border-top: 6px solid #eee;`
        : css`border-top: 6px solid transparent; border-bottom: 6px solid transparent; border-left: 6px solid #eee;`}
    margin-bottom: 4px;
  }
`;
const Card = styled.div`
  height: ${(p) => (p.$h ? p.$h + "px" : "auto")};
  margin: 6px 0 0 10px;
  background: #494949;
  color: #e6e6e6;
  overflow: hidden;
`;
const PivotGrid = styled.div`
  display: grid;
  grid-template-columns: 64px repeat(3, 28px) 1fr;
  height: 93px;
  padding: 3px 0 6px 10px;
`;
const PivotTitle = styled.span`
  padding: 6px 0 0 15px;
`;
const Dots = styled.div`
  display: grid;
  grid-column: 2 / 5;
  grid-template-columns: repeat(3, 28px);
  grid-template-rows: repeat(3, 28px);
  place-items: center;
`;
const Dot = styled.button`
  width: 12px;
  height: 12px;
  border: 1px solid ${c.icon};
  border-radius: 50%;
`;
const PivotSide = styled.div`
  padding-top: 2px;
`;
const AreaRow = styled.div`
  display: flex;
  align-items: center;
  gap: 3px;
  height: 21px;
  padding-left: 20px;
  color: #2f2f2f;
  span { width: 16px; }
`;
const MoveTitle = styled.span`
  width: 50px;
`;
const Row = styled.div`
  display: flex;
  align-items: center;
  gap: ${(p) => p.$gap || 0}px;
  height: ${(p) => p.$h}px;
  padding-left: ${(p) => p.$left}px;
`;
const MoveRow = styled.div`
  display: flex;
  align-items: center;
  height: ${(p) => p.$h}px;
  padding-left: 23px;
`;
const AxisLabel = styled.label`
  display: flex;
  align-items: center;
  gap: 5px;
  width: 63px;
  justify-content: flex-end;
`;
const Check = styled.input`
  width: 12px;
  height: 12px;
  margin-right: 5px;
  background: #000;
`;
const CheckWrap = styled.label`
  display: flex;
  align-items: center;
  position: relative;
  svg { position: absolute; left: 1px; pointer-events: none; }
`;

const corner = (d) => <path d={d} stroke="#8f8f8f" strokeWidth="2" />;
const arrow = (d) => <path d={d} stroke={I} strokeWidth="2" />;
function MoveBtn({ label, w, children }) {
  return (
    <Slot $w={w} aria-label={label}>
      <Svg w={12} box={12}>{children}</Svg>
    </Slot>
  );
}

const growSets = [
  [["Shrink loop", false, false], ["Shrink", true, false]],
  [["Grow", true, true], ["Grow loop", false, true]],
];
function GrowArt({ tall, out }) {
  return (
    <svg width="18" height="16" viewBox="0 0 18 16" fill="none" aria-hidden="true">
      <path d={out ? "M2 3H16M4 1L1 3L4 5M14 1L17 3L14 5" : "M0 3H6M4 1L7 3L4 5M18 3H12M14 1L11 3L14 5"} stroke={G} strokeWidth="1.500" />
      {[2, 7, 12].map((x, i) =>
        (tall ? [8, 12] : [10]).map((y) => <path key={x + "-" + y} d={`M${x} ${y}h4v3h-4Z`} fill={out || i === 1 ? G : I} />)
      )}
    </svg>
  );
}

function PlainSelect({ label, value, ...rest }) {
  return (
    <FlatSelect aria-label={label} defaultValue={value} {...rest}>
      <option>{value}</option>
    </FlatSelect>
  );
}

const Gap = styled.span`
  flex: none;
  width: ${(p) => p.$w}px;
`;

function ToolkitPanel() {
  const nodesDef = [[2, 2], [18, 2], [2, 18], [18, 18]];
  const boxes = nodesDef.map(([x, y]) => <path key={x + "," + y} d={`M${x} ${y}h4v4h-4Z`} stroke={G} strokeWidth="1.300" fill="#333" />);
  return (
    <Toolkit>
      <TabStrip $left={2}><Tab>UV Toolkit</Tab></TabStrip>
      <MenuRow $left={11}><a href="#options">Options</a><a href="#help">Help</a></MenuRow>
      <ToolkitScroll>
        <ToolkitContent>
          <ModeRow>
            <Slot $w={36} $h={36} $on aria-label="Vertex selection">
              <Svg w={30}><path d="M6 3H18M6 21H18M3 6V18M21 6V18M7 5H17M7 19H17M5 7V17M19 7V17" stroke="#ddd" /><g transform="translate(-1 -1)">{nodesDef.map(([x, y]) => <path key={x + "," + y} d={`M${x + 1} ${y + 1}h4v4h-4Z`} stroke={G} fill="#333" strokeWidth="1.200" />)}</g></Svg>
            </Slot>
            <Slot $w={38} $h={36} aria-label="Edge selection">
              <Svg w={28}><path d="M12 1L1 12L12 23L23 12" stroke={I} strokeWidth="1.200" /><path d="M12 1L23 12" stroke={G} strokeWidth="1.500" /></Svg>
            </Slot>
            <Slot $w={36} $h={36} aria-label="Face selection">
              <Svg w={28}><path d="M12 0L23 6L12 12L1 6Z" fill="#d0d0d0" stroke={K} strokeWidth=".7" /><path d="M1 6L12 12V24L1 18Z" fill={I} /><path d="M23 6L12 12V24L23 18Z" fill={G} stroke={K} strokeWidth=".7" /></Svg>
            </Slot>
            <Divider $h={36} $m={15} />
            <Slot $w={34} $h={36} aria-label="UV selection">
              <Svg w={28}><path d="M7 4H17M7 20H17M4 7V17M20 7V17" stroke={I} strokeWidth="1.300" />{boxes}{checkArt(3, 3, 7.5, "#d0d0d0")}</Svg>
            </Slot>
            <Slot $w={40} $h={36} aria-label="UV shell selection">
              <Svg w={26}><path d="M1 1H23V23H1ZM1 12H23M12 1V23" stroke={G} strokeWidth="1.300" /></Svg>
            </Slot>
          </ModeRow>
          <CountLine>2257 vertices selected</CountLine>
          <RadioSet>
            {["Pick/Marquee", "Drag", "Tweak/Marquee"].map((t, i) => (
              <RadioLabel key={t} $h={18} $left={13}><Radio type="radio" name="pick" defaultChecked={i === 0} />{t}</RadioLabel>
            ))}
          </RadioSet>
          <OptionRow>
            <OptionName $w={72}>Symmetry:</OptionName><Caret />
            <Gap $w={11} />
            <PlainSelect label="Symmetry" value="Off" $w={134} $h={23} />
            <Slot $w={31} aria-label="Symmetrize">
              <Svg w={19}><path d="M1 1H10V10H1ZM14 1H23V10H14ZM0 12H10V23L1 19ZM14 12H24L23 19L14 23Z" fill={G} /><path d="M12 0V24" stroke="#ddd" strokeDasharray="4 2" strokeWidth="1.500" /></Svg>
            </Slot>
          </OptionRow>
          {["Selection Constraint:", "Transform Constraint:"].map((t) => (
            <OptionRow key={t}>
              <OptionName $w={127}>{t}</OptionName><Caret />
              <Gap $w={11} />
              <PlainSelect label={t} value="Off" $h={23} />
            </OptionRow>
          ))}
          <ButtonRow $gap={12} $pad="4px 0 0 42px">
            <PushButton $w={50}>All</PushButton><PushButton $w={50}>Clear</PushButton><PushButton $w={50}>Inverse</PushButton>
          </ButtonRow>
          <GrowRow>
            {growSets.map((pair) => (
              <GrowPair key={pair[0][0]}>
                {pair.map(([label, tall, out]) => (
                  <Slot key={label} $w={18} $h={16} aria-label={label}><GrowArt tall={tall} out={out} /></Slot>
                ))}
              </GrowPair>
            ))}
          </GrowRow>
          <Fold $w="253px" $m="0 0 2px 11px">Pinning</Fold>
          <Fold $w="253px" $m="0 0 2px 11px">Select By Type</Fold>
          <Fold $w="253px" $m="0 0 8px 11px">Soft Selection</Fold>
          <Fold $open $w="265px" $m="0 0 0 5px">Transform</Fold>
          <Card $h={120}>
            <PivotGrid>
              <PivotTitle>Pivot</PivotTitle>
              <Dots>{Array.from({ length: 9 }, (_, i) => <Dot key={i} aria-label={`Pivot ${i + 1}`} />)}</Dots>
              <PivotSide>
                <RadioLabel $h={19} $left={10}><Radio type="radio" name="pivot" $bg="#000" defaultChecked />Selection</RadioLabel>
                <RadioLabel $h={20} $left={10}><Radio type="radio" name="pivot" $bg="#000" />UV Area:</RadioLabel>
                {["U:", "V:"].map((t) => (
                  <AreaRow key={t}>
                    <span>{t}</span>
                    <NumField aria-label={t + " min"} defaultValue="0" $w={18} $h={18} $bg="#424242" $color="#2f2f2f" />
                    <NumField aria-label={t + " max"} defaultValue="1" $w={18} $h={18} $bg="#424242" $color="#2f2f2f" />
                  </AreaRow>
                ))}
              </PivotSide>
            </PivotGrid>
            <ButtonRow $gap={2} $pad="0 0 0 71px"><PushButton $w={80}>Edit Pivot</PushButton><PushButton $w={80}>Reset</PushButton></ButtonRow>
          </Card>
          <Card $h={209}>
            <MoveRow $h={35}>
              <MoveTitle>Move</MoveTitle>
              <AxisLabel>U<NumField defaultValue="0.5000" $w={48} $h={20} $bg="#000" $color="#e6e6e6" /></AxisLabel>
              <MoveBtn w={41} label="Move up left">{corner("M3 10V3H10")}</MoveBtn>
              <MoveBtn w={44} label="Move up">{arrow("M1 9L6 3L11 9")}</MoveBtn>
              <MoveBtn w={41} label="Move up right">{corner("M2 3H9V10")}</MoveBtn>
            </MoveRow>
            <MoveRow $h={23}>
              <MoveTitle />
              <AxisLabel>V<NumField defaultValue="0.4979" $w={48} $h={20} $bg="#000" $color="#e6e6e6" /></AxisLabel>
              <MoveBtn w={41} label="Move left">{arrow("M9 1L3 6L9 11")}</MoveBtn>
              <Caret />
              <Gap $w={6} />
              <NumField aria-label="Move distance" $tail defaultValue="0.1000" $w={38} $h={20} $pad={3} $color="#e6e6e6" />
              <MoveBtn w={38} label="Move right">{arrow("M3 1L9 6L3 11")}</MoveBtn>
            </MoveRow>
            <MoveRow $h={41}>
              <MoveTitle />
              <AxisLabel as="span" />
              <MoveBtn w={41} label="Move down left">{corner("M3 2V9H10")}</MoveBtn>
              <MoveBtn w={44} label="Move down">{arrow("M1 3L6 9L11 3")}</MoveBtn>
              <MoveBtn w={41} label="Move down right">{corner("M2 9H9V2")}</MoveBtn>
            </MoveRow>
            <Row $h={24} $left={72}>
              <OptionName $w={62}>Step Snap:</OptionName><Caret />
              <Gap $w={8} />
              <PlainSelect label="Step snap" value="Off" $w={58} $h={18} $color="#e6e6e6" />
              <Gap $w={4} />
              <NumField aria-label="Snap step" defaultValue="0.10" $w={42} $h={18} $bg="#424242" $color="#2f2f2f" />
            </Row>
            <Row $h={34} $left={72}>
              <CheckWrap><Check type="checkbox" defaultChecked /><svg width="10" height="10" viewBox="0 0 10 10" fill="none"><path d="M1 5L4 8L9 1" stroke="#fff" strokeWidth="2" /></svg>Retain component spacing</CheckWrap>
            </Row>
            <Row $h={18} $left={70} $gap={1}>
              <PushButton $w={84} $h={22}>
                <svg width="19" height="12" viewBox="0 0 19 12" fill="none" aria-hidden="true"><path d="M1.500 2.500H3.500V4.500H1.500ZM8.500 2.500H10.500V4.500H8.500ZM15.500 2.500H17.500V4.500H15.500ZM5 3.500H7M12 3.500H14" stroke={G} strokeWidth="1.400" /><path d="M3 9.500H8M11 9.500H16" stroke="#ddd" /></svg>
                Distribute
              </PushButton>
              <PushButton $w={30} $h={22} $on>U</PushButton>
              <PushButton $w={30} $h={22}>V</PushButton>
            </Row>
            <Fold $bright $w="250px" $m="8px 0 0 5px">Tools</Fold>
          </Card>
          <Card $h={40}>
            <Row $h={34} $left={20}>
              <OptionName $w={52}>Rotate</OptionName><Caret />
              <Gap $w={8} />
              <NumField aria-label="Rotate angle" defaultValue="90.0000" $w={58} $h={20} $color="#e6e6e6" />
              <Gap $w={9} />
              {["M6 15A8 8 0 1 1 17 17M1 6V13H8", "M18 15A8 8 0 1 0 7 17M23 6V13H16"].map((d) => (
                <Slot key={d} $w={28} aria-label="Rotate shell"><Svg w={16}><path d={d} stroke={G} strokeWidth="2.200" /><path d="M10 13H15V18H10Z" stroke="#ddd" /></Svg></Slot>
              ))}
            </Row>
          </Card>
        </ToolkitContent>
        <VScroll><VArrow $up /><VThumb /><VArrow /></VScroll>
      </ToolkitScroll>
      <Grip $w={94} $m="3px 0 4px 96px" />
      <Fold $w="281px" $m="0 0 4px 3px">UV Sets</Fold>
    </Toolkit>
  );
}

const menuLinks = (names) => names.map((n) => <a key={n} href={"#" + n.replace(/\W/g, "")}>{n}</a>);

const FieldBox = styled.button`
  flex: none;
  width: ${(p) => p.$w}px;
  height: ${(p) => p.$h || 22}px;
  padding-left: 5px;
  border: 1px solid #525252;
  border-radius: 3px;
  background: #424242;
  text-align: left;
  white-space: nowrap;
`;
const CaretSlot = styled.button`
  display: flex;
  flex: none;
  align-items: center;
  justify-content: center;
  width: ${(p) => p.$w}px;
`;

function AccountArt() {
  return (
    <AccountBox>
      <Svg w={18}><circle cx="12" cy="8" r="7" fill="#6f92e8" stroke="#1d2a52" /><path d="M3 23Q4 17 10 16H14Q20 17 21 23Z" fill="#6f92e8" stroke="#1d2a52" /></Svg>
    </AccountBox>
  );
}

export default function App() {
  return (
    <Screen>
      <Global />
      <MenuRow $clipped $left={15}>
        {menuLinks(["Edit", "Create", "Select", "Modify", "Display", "Windows", "Mesh", "Edit Mesh", "Mesh Tools", "Mesh Display", "Curves", "Surfaces", "Deform", "UV", "Generate", "Cache", "Arnold", "Help"])}
        <MenuEnd href="#workspace">Workspace</MenuEnd>
      </MenuRow>

      <StatusLine>
        <ModeCombo $w={85} $h={20} $cut={14} $pad={4}>
          <select aria-label="Menu set" defaultValue="Modeling"><option>Modeling</option></select>
          <ComboArrow $line $color={c.icon} />
        </ModeCombo>
        <Separator />
        <IconSet items={fileIcons} />
        <Collapser />
        <Separator $w={21} />
        <IconSet items={maskIcons} on={2} />
        <Collapser />
        <Separator $w={21} />
        <IconSet items={snapIcons} />
        <CaretSlot $w={18} aria-label="Live surface options"><Caret /></CaretSlot>
        <FieldBox $w={100}>No Live Surface</FieldBox>
        <Separator />
        <CaretSlot $w={20} aria-label="Symmetry options"><Caret /></CaretSlot>
        <FieldBox $w={99}>Symmetry: Off</FieldBox>
        <Collapser />
        <Separator />
        <IconSet items={renderIcons} />
        <Collapser />
        <Separator $w={20} />
        <ModeCombo $w={120} $h={22} $pad={21} $color="#eeeeee">
          <select aria-label="Account" defaultValue="maubanel"><option>maubanel</option></select>
          <ComboArrow $color="#eeeeee" />
          <AccountArt />
        </ModeCombo>
      </StatusLine>

      <ShelfBox>
        <ShelfHandle>
          <svg width="4" height="8" viewBox="0 0 4 8" fill="none"><path d="M0 2H3M0 5H3" stroke={I} /></svg>
          <svg width="4" height="8" viewBox="0 0 4 8"><circle cx="0" cy="4" r="3" fill={I} /></svg>
        </ShelfHandle>
        <ShelfMain>
          <ShelfTabs>
            {["Curves / Surfaces", "Poly Modeling", "Sculpting", "Rigging", "Animation", "Rendering", "FX", "FX Caching", "Custom", "XGen", "Bifrost", "MASH", "Motion Graphics", "Arnold"].map((t) => (
              <ShelfTab key={t} $on={t === "Poly Modeling"}>{t}</ShelfTab>
            ))}
          </ShelfTabs>
          <ShelfIcons>
            {shelf.map((s, i) =>
              s ? (
                <Slot key={s[0]} $w={35} $h={34} aria-label={s[0]}>
                  <Svg w={24}>{s[1]}</Svg>
                </Slot>
              ) : (
                <Divider key={i} $h={36} $m={5} $color="#8a8a8a" />
              )
            )}
          </ShelfIcons>
        </ShelfMain>
      </ShelfBox>

      <Workspace>
        <Toolbox>
          <svg width="17" height="752" viewBox="0 0 17 752" fill="none" aria-hidden="true">
            <path d="M2 4.500H12M2 7.500H12" stroke="#8a8a8a" strokeDasharray="1 2" />
            <path d="M0 17L6 23H2L0 32ZM0 54L8 62H3L5 69L2 71L0 68Z" fill={I} />
            <path d="M0 44Q4 44 3 47M0 51Q4 53 3 55M0 98Q3 99 2 102M0 107Q3 107 2 103" stroke={c.teal} strokeWidth="2" />
            <path d="M8 81L0 90" stroke={I} strokeWidth="3" />
            <path d="M0 123H13V159H0Z" fill={c.blue} />
            <path d="M0 136H1V148H0Z" fill="#eee" stroke="#333" />
            <path d="M5 137L10 141L5 146Z" fill={c.teal} stroke="#2a3a40" />
            <path d="M0 166Q7 167 8 179M5 175L8 180L11 175" stroke={c.teal} strokeWidth="1.500" />
            <circle cx="0" cy="178" r="2" fill={I} />
            <path d="M0 202.500H7.500V226.500H0" stroke={c.teal} strokeDasharray="3 2" />
            <path d="M0 313H13" stroke="#8a8a8a" strokeWidth="2" />
            <path d="M0 323H9V351H0Z" fill={I} />
            <path d="M0 325.500H6.500V348.500H0" stroke="#444" />
            <path d="M0 360H9V373H0ZM0 397H9V425H0Z" fill={I} />
            <path d="M0 334L4 337.500L0 341ZM0 364L3 363L6 366.500L3 370L0 369ZM0 409L3 408L6 411.500L3 415L0 414Z" fill="#333" />
            <path d="M0 375.500H8.500V388.500H0M2.500 378V386M0 382H6" stroke={I} />
            <path d="M0 430H13V466H0Z" fill={c.blue} />
            <path d="M0 433.500H9.500V462.500H0M0 435.500H7.500V460.500H0M0 439.500H1M0 444.500H5M0 450.500H2M0 456.500H4" stroke="#ddd" />
            <path d="M0 718H11V746H3V728L0 736Z" fill="#20aeb0" />
            <path d="M11 720L3 736V746H8Z" fill="#0d7f88" />
          </svg>
        </Toolbox>
        <OutlinerPanel>
          <TabStrip $left={2}><Tab>Outliner</Tab></TabStrip>
          <MenuRow $left={11}>{menuLinks(["Display", "Show", "Help"])}</MenuRow>
          <SearchRow>
            <Svg w={16}><path d="M5 3H19M5 21H19M4 6V18M20 6V18" stroke="#777" strokeDasharray="3 2" strokeWidth="1.500" /><path d="M0 0L7 3L0 7ZM24 0L17 3L24 7ZM0 17L7 21L0 24ZM24 17L17 21L24 24Z" fill="#777" /></Svg>
            <SearchInput placeholder="Search..." aria-label="Search" />
          </SearchRow>
          <NodeList>
            {nodes.map(([name, art, muted]) => (
              <NodeRow key={name} $muted={muted} $on={name === "pPlane1"}><Svg w={16}>{art}</Svg>{name}</NodeRow>
            ))}
          </NodeList>
          <HScroll />
          <Grip $w={120} $m="2px 0 7px 88px" />
        </OutlinerPanel>
        <Viewport />
        <EdgeRule />
      </Workspace>

      <TimeRow>
        <CurrentFrame />
        <TimeTrack>
          <TimeMark>5</TimeMark>
          <TimeMark>10</TimeMark>
          <LastMark>120</LastMark>
        </TimeTrack>
        <Gap $w={8} />
        <Row $h={30}><NumField aria-label="Current frame" defaultValue="1" $w={14} $h={18} /></Row>
      </TimeRow>
      <RangeRow>
        <NumField aria-label="Animation start" $w={75} $h={25} />
        <NumField aria-label="Playback start" defaultValue="1" $w={88} $h={25} />
        <RangeTrack><RangeThumb><Knob />1<Grow />120<Knob /></RangeThumb></RangeTrack>
        <NumField aria-label="Playback end" defaultValue="120" $w={88} $h={25} />
        <NumField aria-label="Animation end" defaultValue="200" $w={88} $h={25} />
        <Tail>
          <Separator $w={3} />
          <svg width="16" height="18" viewBox="0 0 16 18" fill="none"><path d="M2 0H11V18L6 12L2 18Z" fill="#d9693c" /><path d="M11 0V7M7 4H15" stroke="#ddd" strokeWidth="2" /></svg>
          <Separator $w={4} />
          <Caret />
          <FieldBox $w={102} $h={25}>No Character Set</FieldBox>
          <Caret />
          <FieldBox $w={102} $h={25}>No Anim Layer</FieldBox>
          <Separator $w={3} />
        </Tail>
      </RangeRow>
      <CommandRow><CommandField aria-label="Command" $w={453} /><CommandField aria-label="Result" readOnly /></CommandRow>

      <UvWindow>
        <TitleBar>
          <svg width="16" height="16" viewBox="0 0 16 16" fill="none" aria-hidden="true"><path d="M0 0H16V16H0Z" fill="#d5ecec" /><path d="M2 11V2H5L8 7L11 2H14V11H11V6L8 11L5 6V11Z" fill="#138a90" /><path d="M5 14H12" stroke="#48a9ad" strokeDasharray="2 1" /></svg>
          <Grow />
          <WinButton aria-label="Minimize"><svg width="10" height="10"><path d="M0 5.500H10" stroke="#000" /></svg></WinButton>
          <WinButton aria-label="Maximize"><svg width="11" height="11" fill="none"><path d="M0.500 0.500H10.500V10.500H0.500Z" stroke="#000" /></svg></WinButton>
          <WinButton aria-label="Close"><svg width="11" height="11"><path d="M0.500 0.500L10.500 10.500M10.500 0.500L0.500 10.500" stroke="#000" /></svg></WinButton>
        </TitleBar>
        <WinBody>
          <EditorColumn>
            <TabStrip $left={2}><Tab>UV Editor</Tab></TabStrip>
            <EditorFrame>
              <MenuRow $left={8} $h={18}>{menuLinks(["Edit", "Create", "Select", "Cut/Sew", "Modify", "Tools", "View", "Image", "Textures", "UV Sets", "Help"])}</MenuRow>
              <EditorTools>
                {uvLeft.map((t, i) =>
                  t ? <Slot key={t[0]} $w={t[1] ? 22 : 23} aria-label={t[0]} $on={t[1]}><Svg w={16}>{t[2]}</Svg></Slot> : <Divider key={i} $h={22} $m={2} />
                )}
                <Grow />
                <Slot $w={22} $on aria-label="Display image"><Svg w={18}>{picArt("#333")}</Svg></Slot>
                <Slot $w={24} aria-label="Checker map"><Svg w={16}>{checkArt(8, 3, 0, "#d0d0d0")}</Svg></Slot>
                <CaretSlot $w={19} aria-label="Texture list"><Caret /></CaretSlot>
                <PlainSelect label="Texture" value="No texture found" $w={118} $h={20} $color="#8c8c8c" />
                <Slot $w={24} aria-label="RGB channels">
                  <Svg w={18}><circle cx="12" cy="12" r="10" stroke={G} strokeWidth="2" /><path d="M0 8H24V16H0Z" fill="#444" /><path d="M1 16V8.500H5Q7 10 5 12H1M5 12L7 16M15 8.500H10V15.500H15V12H13M18 8V16H21Q24 14 21 12H18M18 8.500H21Q23 10 21 12" stroke={G} strokeWidth="1.800" /></Svg>
                </Slot>
                <Slot aria-label="Dim image"><Svg w={17}>{picArt("#4a7a63")}</Svg></Slot>
                <Exposure type="range" aria-label="Exposure" defaultValue="51" />
                <Collapser w={10} /><Collapser w={10} />
              </EditorTools>
              <CanvasWrap>
                <UvCanvas />
                <HudRow><span>{"U:  0.5 V:  0.498"}</span><span>(1/1) UV shells, (0/0) overlapping UVs, (0/0) reversed UVs</span></HudRow>
              </CanvasWrap>
            </EditorFrame>
          </EditorColumn>
          <ToolkitPanel />
        </WinBody>
      </UvWindow>
    </Screen>
  );
}
